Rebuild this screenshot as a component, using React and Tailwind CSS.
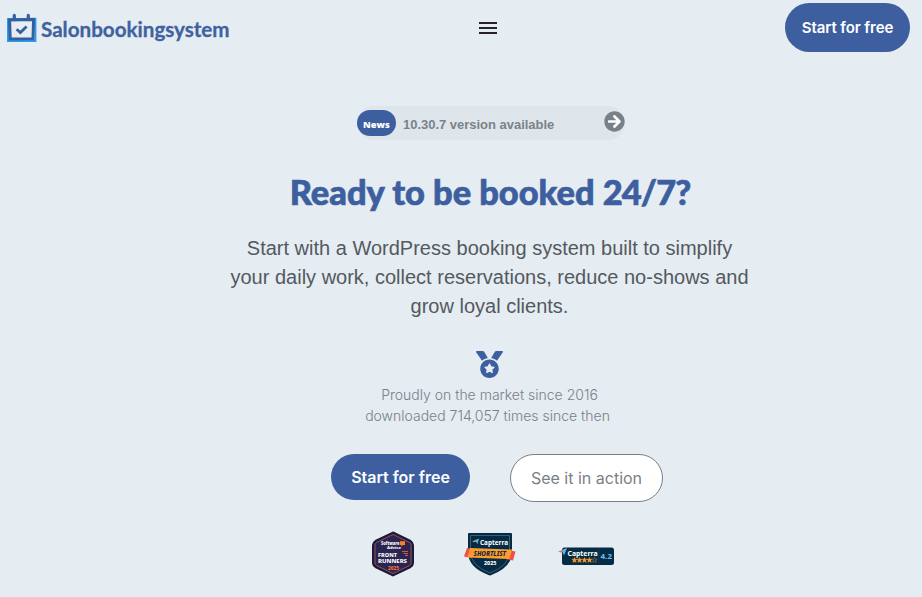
import React from 'react';
import { FaMedal, FaArrowCircleRight } from 'react-icons/fa';

const Logo = () => (
  <a href="#" className="flex items-start">
    <svg width="30" height="30" viewBox="0 0 30 30" className="ml-[1px] mt-[13px]">
      <rect x="1" y="6" width="27.4" height="22" fill="none" stroke="#2b9df0" strokeWidth="2" />
      <path d="M2.6 7 L26.6 6.4 L26 25.8 L3.2 26 Z" fill="none" stroke="#34609f" strokeWidth="3" />
      <path d="M7.3 2.4 V6 M21.3 2.4 V6" stroke="#34609f" strokeWidth="3.2" strokeLinecap="round" />
      <path d="M9.6 16.2 L13.4 19.6 L19.6 13.6" fill="none" stroke="#34609f" strokeWidth="2.8" />
    </svg>
    <span className="ml-[4px] mt-[15px] font-['Lato'] text-[20.6px] leading-[28px] font-bold text-[#3f62a0] [-webkit-text-stroke:0.3px_#3f62a0]">
      Salonbookingsystem
    </span>
  </a>
);

const SoftwareAdviceBadge = () => (
  <svg width="44" height="46" viewBox="0 0 44 46" fontFamily="Noto Sans, sans-serif">
    <path d="M22 1.5 L39.5 10 Q42 11.5 42 14 V32 Q42 34.5 39.5 36 L22 44.5 L4.5 36 Q2 34.5 2 32 V14 Q2 11.5 4.5 10 Z" fill="#2c2450" stroke="#1d1a3c" strokeWidth="2" />
    <path d="M22 3.5 L38.5 11.5 Q40 12.5 40 14 V32 Q40 33.5 38.5 34.5 L22 42.5 L5.5 34.5 Q4 33.5 4 32 V14 Q4 12.5 5.5 11.5 Z" fill="none" stroke="#a95e45" strokeWidth="0.8" />
    <text x="10" y="14" fontSize="4.4" fontWeight="800" textLength="18.5" lengthAdjust="spacingAndGlyphs" fill="#fff">Software</text>
    <text x="16" y="18.2" fontSize="4.2" fontWeight="800" textLength="14" lengthAdjust="spacingAndGlyphs" fill="#fff">Advice</text>
    <path d="M29 10.3 H34 V14 H32 L30.5 15.5 V14 H29 Z" fill="#ff8024" />
    <text x="7" y="25.8" fontSize="5.8" fontWeight="800" textLength="19" lengthAdjust="spacingAndGlyphs" fill="#fff">FRONT</text>
    <text x="7" y="31.6" fontSize="5.8" fontWeight="800" textLength="29" lengthAdjust="spacingAndGlyphs" fill="#fff">RUNNERS</text>
    <path d="M31 20.5 H37 M32.5 22.5 H37 M34 24.5 H37" stroke="#c8633c" strokeWidth="1" />
    <text x="17" y="38.8" fontSize="4.4" fontWeight="800" textLength="11" lengthAdjust="spacingAndGlyphs" fill="#f07a3a">2025</text>
  </svg>
);

const ShortlistBadge = () => (
  <svg width="52" height="44" viewBox="0 0 52 44" fontFamily="Noto Sans, sans-serif">
    <path d="M5 2 H47 V20 Q47 35 26 42.5 Q5 35 5 20 Z" fill="#062c45" stroke="#062c45" strokeWidth="2" strokeLinejoin="round" />
    <path d="M6.5 3.5 H45.5 V20 Q45.5 33.5 26 41 Q6.5 33.5 6.5 20 Z" fill="none" stroke="#5f8290" strokeWidth="0.6" />
    <path d="M8 9.5 L15 6.5 L13.5 12 L11.5 9 Z" fill="#56b8e8" />
    <path d="M8 9.5 L12.5 8.3 L11 10.3 Z" fill="#ff8a2a" />
    <text x="16" y="12.5" fontSize="7.2" fontWeight="700" textLength="28" lengthAdjust="spacingAndGlyphs" fill="#fff">Capterra</text>
    <path d="M3 16 L10 17 L8 26 L0 24.5 Z M44 18 L51.5 19.5 L49 28.5 L42 27 Z" fill="#ef4f4c" />
    <path d="M6 16 L48 17.5 L45.5 27 L3.5 25.5 Z" fill="#ff9b2d" />
    <text x="9.5" y="23.9" fontSize="6.2" fontWeight="800" fontStyle="italic" textLength="32.5" lengthAdjust="spacingAndGlyphs" fill="#0b2a3e">SHORTLIST</text>
    <text x="20" y="33" fontSize="5" fontWeight="800" textLength="12.5" lengthAdjust="spacingAndGlyphs" fill="#fff">2025</text>
  </svg>
);

const star = 'M0 -2.6 L0.8 -0.8 L2.6 -0.7 L1.2 0.5 L1.7 2.4 L0 1.4 L-1.7 2.4 L-1.2 0.5 L-2.6 -0.7 L-0.8 -0.8 Z';

const RatingBadge = () => (
  <svg width="57" height="20" viewBox="0 0 57 20" fontFamily="Noto Sans, sans-serif">
    <rect x="4" y="1.5" width="52" height="17.5" rx="2.5" fill="#062c45" />
    <path d="M0 5.5 L9 2 L6 9.5 L4.5 6 Z" fill="#5cbbe8" />
    <path d="M0 5.5 L6 4.5 L4 6.8 Z" fill="#f16a31" />
    <text x="9.5" y="9.8" fontSize="7.2" fontWeight="700" textLength="30" lengthAdjust="spacingAndGlyphs" fill="#fff">Capterra</text>
    {[16.5, 21.5, 26.5, 31.5].map((x) => (
      <path key={x} d={star} transform={`translate(${x} 14)`} fill="#ff9d28" stroke="#ff9d28" strokeWidth="0.4" />
    ))}
    <path d={star} transform="translate(36.5 14)" fill="none" stroke="#a6783c" strokeWidth="0.6" />
    <path d="M40.7 3 V17" stroke="#29475a" strokeWidth="0.5" />
    <text x="42.5" y="12.5" fontSize="7.6" fontWeight="800" textLength="11.5" lengthAdjust="spacingAndGlyphs" fill="#65b8e8">4.2</text>
  </svg>
);

const App = () => {
  return (
    <div className="h-[597px] w-[922px] overflow-hidden bg-[#e5ecf2] font-['Inter',sans-serif]">
      <header className="grid h-[56px] grid-cols-[473px_1fr_auto] items-start pl-[6px] pr-[12px]">
        <Logo />
        <button className="mt-[22px] flex w-[18px] flex-col gap-[3px]">
          <span className="h-[2px] w-full bg-[#25222b]" />
          <span className="h-[2px] w-full bg-[#25222b]" />
          <span className="h-[2px] w-full bg-[#25222b]" />
        </button>
        <a href="#" className="mt-[3px] flex h-[49px] w-[125px] items-center justify-center rounded-full bg-[#3d5f9f] pt-px text-[15px] font-semibold tracking-[-0.08px] text-white">
          Start for free
        </a>
      </header>

      <main className="flex w-[980px] flex-col items-center pt-[50px]">
        <a href="#" className="ml-[2px] flex h-[34px] w-[268px] items-start rounded-full bg-[#dfe6eb]">
          <span className="mt-[4px] flex h-[26px] w-[39px] items-center justify-center rounded-full bg-[#3d5f9f] pt-[3px] font-['Open_Sans'] text-[9.3px] font-extrabold text-white">
            News
          </span>
          <span className="ml-[7px] mt-[9px] font-['Liberation_Sans'] text-[13px] leading-[20px] font-bold tracking-[-0.02px] text-[#7a828a]">
            10.30.7 version available
          </span>
          <span className="ml-auto mt-[5px] rounded-full bg-[radial-gradient(#fff_60%,transparent_61%)]">
            <FaArrowCircleRight className="text-[21px] text-[#798188]" />
          </span>
        </a>

        <h1 className="mt-[30px] font-['Lato'] text-[34.4px] leading-[44px] font-black text-[#3d5f9f] [-webkit-text-stroke:0.7px_#3d5f9f]">
          Ready to be booked <span className="tracking-[-0.9px]">24/7?</span>
        </h1>

        <p className="mt-[20px] mr-px text-center font-['Liberation_Sans'] text-[20px] leading-[29px] text-[#54595f]">
          Start with a WordPress booking system built to simplify<br />
          your daily work, collect reservations, reduce no-shows and<br />
          grow loyal clients.
        </p>

        <FaMedal className="mt-[30px] mr-[2px] text-[27px] text-[#3d5f9f]" />
        <p className="mt-[6px] mr-[5px] text-center text-[14px] leading-[21px] font-light text-[#7a7f8a]">
          <span className="ml-[4px]">Proudly on the market since 2016</span><br />
          downloaded 714,057 times since then
        </p>

        <div className="mt-[28px] ml-[14px] flex gap-[40px]">
          <a href="#" className="flex h-[46px] w-[139px] items-center justify-center rounded-full bg-[#3d5f9f] text-[16px] font-semibold text-white">
            Start for free
          </a>
          <a href="#" className="flex h-[48px] w-[153px] items-center justify-center rounded-full border border-[#7a7f88] bg-white text-[16px] text-[#7a7f88]">
            See it in action
          </a>
        </div>

        <div className="mt-[29px] ml-[5px] flex items-center">
          <SoftwareAdviceBadge />
          <div className="ml-[49px]"><ShortlistBadge /></div>
          <div className="ml-[42px] mt-[3px]"><RatingBadge /></div>
        </div>
      </main>
    </div>
  );
};

export default App;
